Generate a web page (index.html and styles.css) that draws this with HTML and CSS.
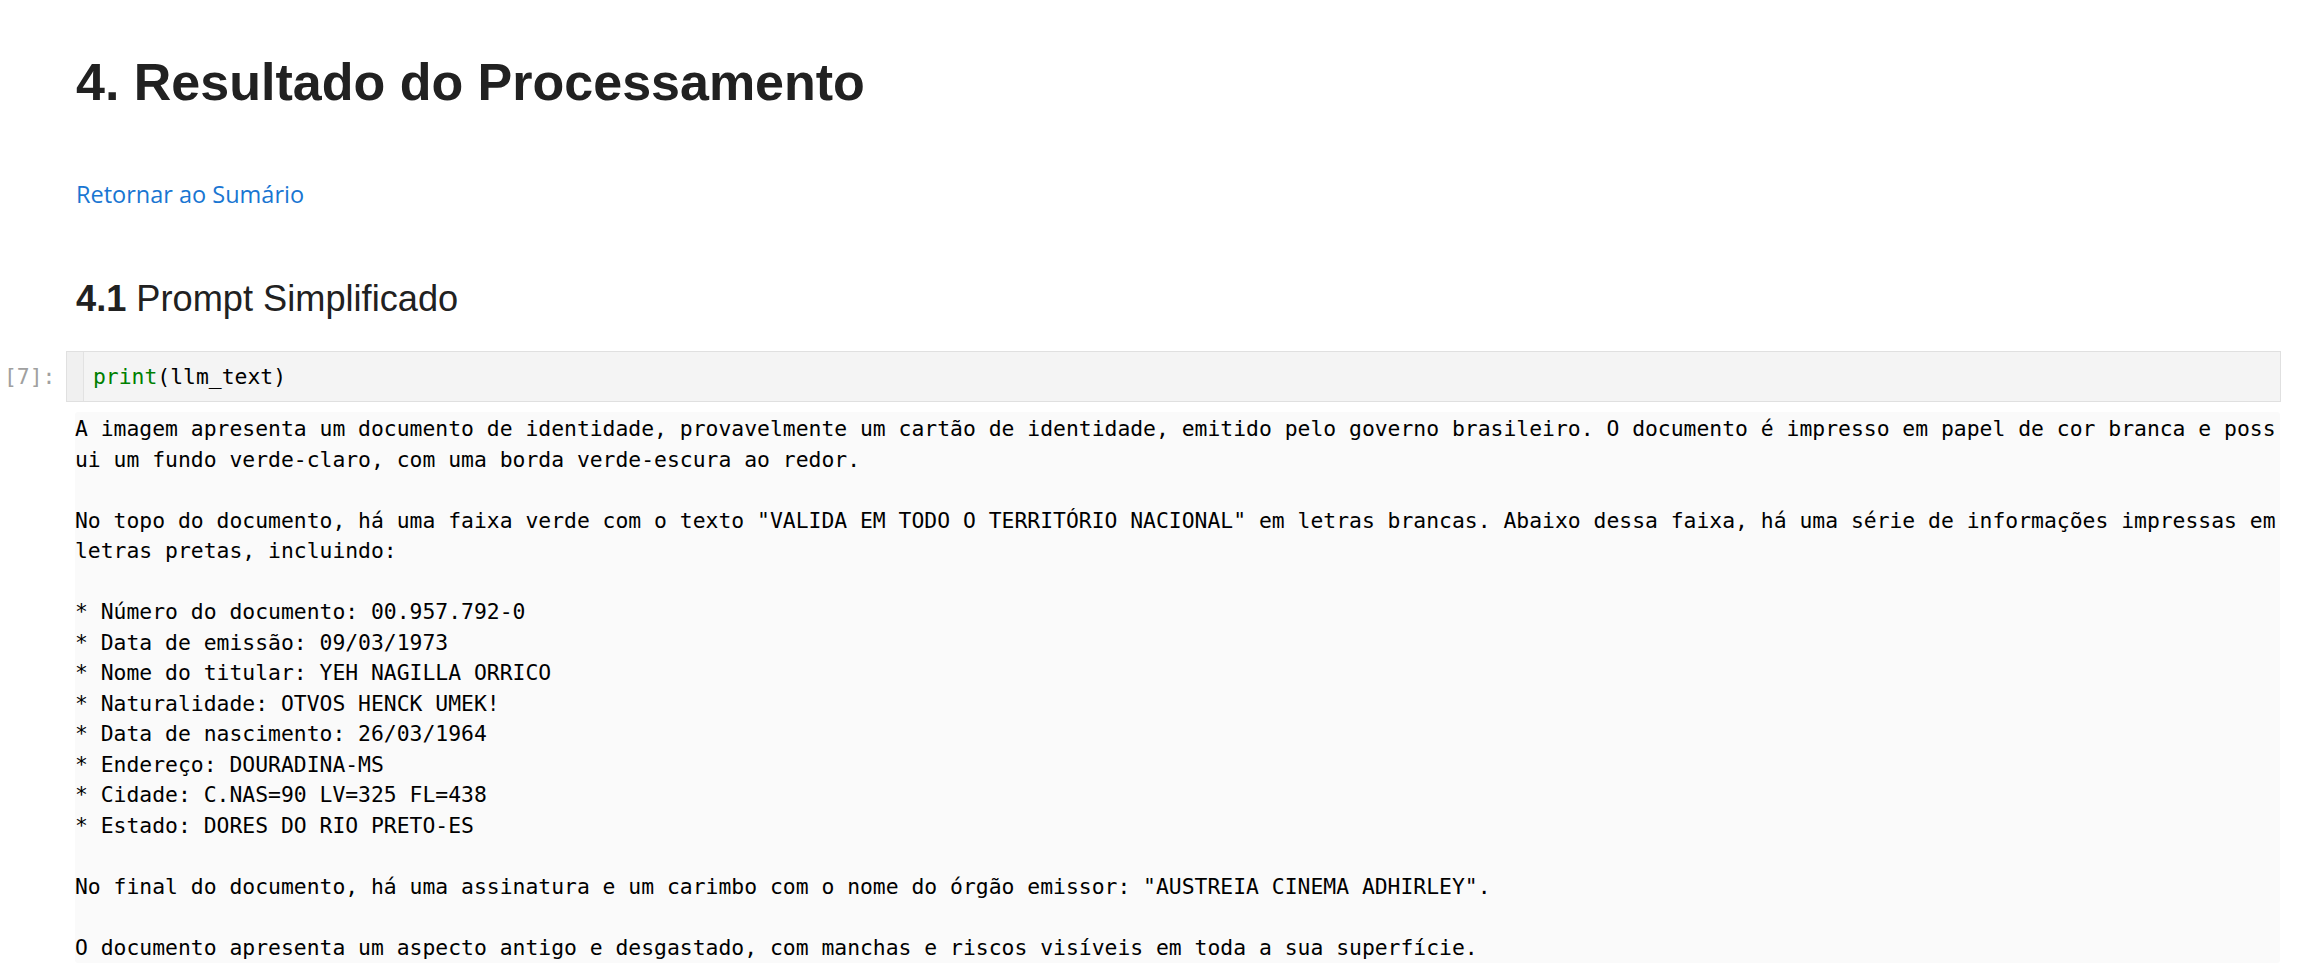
FILE: index.html
```html
<!DOCTYPE html>
<html lang="pt-BR">
<head>
<meta charset="utf-8">
<title>4. Resultado do Processamento</title>
<link rel="stylesheet" href="styles.css">
</head>
<body>
<main class="page">
  <section class="md">
    <h1 class="title">4. Resultado do Processamento</h1>
    <p class="para"><a class="link" href="#sumario">Retornar ao Sumário</a></p>
    <h3 class="subtitle"><b>4.1</b> Prompt Simplificado</h3>
  </section>
  <section class="cell">
    <div class="prompt">[7]:</div>
    <div class="input">
      <div class="gutter"></div>
      <pre class="code"><span class="builtin">print</span>(llm_text)</pre>
    </div>
    <div class="out-prompt"></div>
    <pre class="output">A imagem apresenta um documento de identidade, provavelmente um cartão de identidade, emitido pelo governo brasileiro. O documento é impresso em papel de cor branca e possui um fundo verde-claro, com uma borda verde-escura ao redor.

No topo do documento, há uma faixa verde com o texto "VALIDA EM TODO O TERRITÓRIO NACIONAL" em letras brancas. Abaixo dessa faixa, há uma série de informações impressas em letras pretas, incluindo:

* Número do documento: 00.957.792-0
* Data de emissão: 09/03/1973
* Nome do titular: YEH NAGILLA ORRICO
* Naturalidade: OTVOS HENCK UMEK!
* Data de nascimento: 26/03/1964
* Endereço: DOURADINA-MS
* Cidade: C.NAS=90 LV=325 FL=438
* Estado: DORES DO RIO PRETO-ES

No final do documento, há uma assinatura e um carimbo com o nome do órgão emissor: "AUSTREIA CINEMA ADHIRLEY".

O documento apresenta um aspecto antigo e desgastado, com manchas e riscos visíveis em toda a sua superfície.</pre>
  </section>
</main>
</body>
</html>
```
FILE: styles.css
```css
html, body {
  margin: 0;
  padding: 0;
  background: #ffffff;
}

body {
  font-family: "Open Sans", "Noto Sans", sans-serif;
  color: rgba(0, 0, 0, 0.87);
  overflow: hidden;
}

.page {
  padding: 51px 27px 0 0;
}

.md {
  padding-left: 76px;
}

.title {
  margin: 0;
  font-family: "Liberation Sans", Arial, sans-serif;
  font-weight: bold;
  font-size: 52px;
  line-height: 62.4px;
  color: #212121;
}

.para {
  margin: 64px 0 0;
  font-size: 23.5px;
  line-height: 34px;
}

.link {
  color: #1976d2;
  text-decoration: none;
}

.subtitle {
  margin: 66px 0 0;
  font-family: "Liberation Sans", Arial, sans-serif;
  font-weight: normal;
  font-size: 36.2px;
  line-height: 43.6px;
  color: #212121;
}

.subtitle b {
  font-weight: bold;
}

.cell {
  margin-top: 30px;
  display: grid;
  grid-template-columns: 66px 1fr;
  row-gap: 10px;
}

.prompt {
  font-family: "DejaVu Sans Mono", "Liberation Mono", monospace;
  font-size: 21.38px;
  line-height: 30.4px;
  color: #a0a0a0;
  padding-top: 11px;
  padding-left: 4px;
}

.input {
  display: flex;
  background: #f4f4f4;
  border: 1px solid #e0e0e0;
}

.gutter {
  width: 16px;
  flex: none;
  border-right: 1px solid #e2e2e2;
  background: #f0f0f0;
}

.code {
  margin: 0;
  padding: 10px 0 8.6px 9px;
  font-family: "DejaVu Sans Mono", "Liberation Mono", monospace;
  font-size: 21.38px;
  line-height: 30.4px;
  color: #000000;
}

.builtin {
  color: #008000;
}

.output {
  grid-column: 2;
  margin: 0 1px 0 9px;
  padding: 2px 0 0;
  background: #fafafa;
  border-radius: 3px;
  font-family: "DejaVu Sans Mono", "Liberation Mono", monospace;
  font-size: 21.38px;
  line-height: 30.5px;
  color: #000000;
  white-space: pre-wrap;
  word-break: break-all;
}
```
